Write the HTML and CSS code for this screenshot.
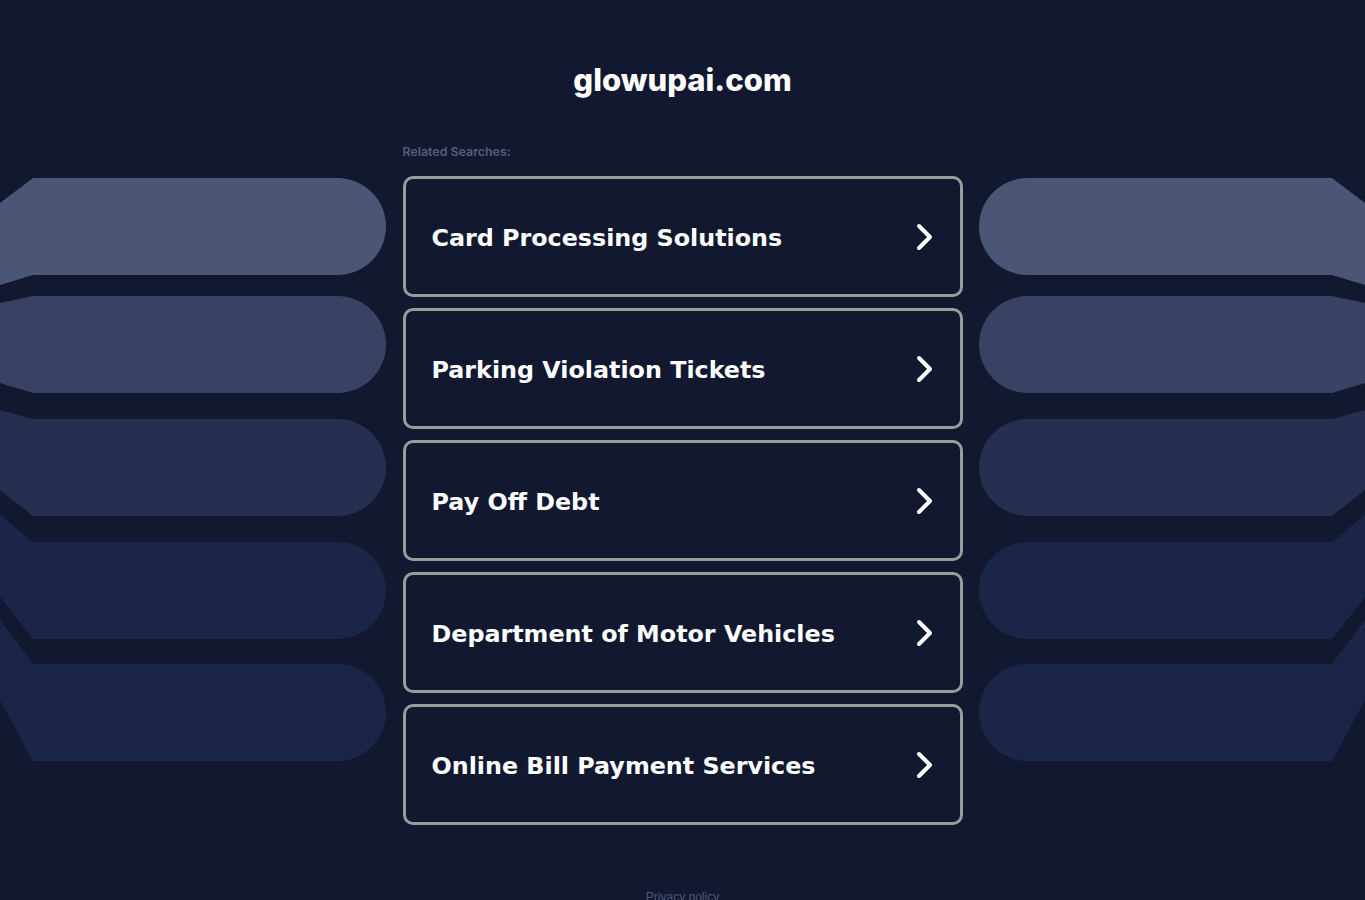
FILE: index.html
```html
<!DOCTYPE html>
<html lang="en">
<head>
<meta charset="utf-8">
<title>glowupai.com</title>
<link rel="stylesheet" href="styles.css">
</head>
<body>
<div class="backdrop" aria-hidden="true">
  <svg class="wing wing-left" viewBox="0 0 386 900" width="386" height="900">
    <defs>
      <pattern id="dots" width="3" height="3" patternUnits="userSpaceOnUse">
        <rect width="3" height="3" fill="#1a2446"/>
        <rect x="1" y="1" width="1" height="1" fill="#212c53"/>
      </pattern>
    </defs>
    <path fill="#4b5574" d="M0,203 L33,178 L337.5,178 A48.5,48.5 0 0 1 337.5,275 L33,275 L0,285 Z"/>
    <path fill="#394262" d="M0,303 L33,296 L337.5,296 A48.5,48.5 0 0 1 337.5,393 L33,393 L0,383 Z"/>
    <path fill="#262f4f" d="M0,410 L33,419 L337.5,419 A48.5,48.5 0 0 1 337.5,516 L33,516 L0,490 Z"/>
    <path fill="url(#dots)" d="M0,515 L33,542 L337.5,542 A48.5,48.5 0 0 1 337.5,639 L33,639 L0,597 Z"/>
    <path fill="url(#dots)" d="M0,620 L33,664 L337.5,664 A48.5,48.5 0 0 1 337.5,761 L33,761 L0,700 Z"/>
  </svg>
  <svg class="wing wing-right" viewBox="0 0 386 900" width="386" height="900">
    <defs>
      <pattern id="dots2" width="3" height="3" patternUnits="userSpaceOnUse">
        <rect width="3" height="3" fill="#1a2446"/>
        <rect x="1" y="1" width="1" height="1" fill="#212c53"/>
      </pattern>
    </defs>
    <path fill="#4b5574" d="M0,203 L33,178 L337.5,178 A48.5,48.5 0 0 1 337.5,275 L33,275 L0,285 Z"/>
    <path fill="#394262" d="M0,303 L33,296 L337.5,296 A48.5,48.5 0 0 1 337.5,393 L33,393 L0,383 Z"/>
    <path fill="#262f4f" d="M0,410 L33,419 L337.5,419 A48.5,48.5 0 0 1 337.5,516 L33,516 L0,490 Z"/>
    <path fill="url(#dots2)" d="M0,515 L33,542 L337.5,542 A48.5,48.5 0 0 1 337.5,639 L33,639 L0,597 Z"/>
    <path fill="url(#dots2)" d="M0,620 L33,664 L337.5,664 A48.5,48.5 0 0 1 337.5,761 L33,761 L0,700 Z"/>
  </svg>
</div>

<main class="page">
  <h1 class="domain">glowupai.com</h1>
  <section class="related">
    <p class="label">Related Searches:</p>
    <ul class="list">
      <li><a class="card" href="#"><span class="card-text">Card Processing Solutions</span><svg class="chev" viewBox="0 0 20 30" width="20" height="30"><path d="M4,4 L15,15 L4,26"/></svg></a></li>
      <li><a class="card" href="#"><span class="card-text">Parking Violation Tickets</span><svg class="chev" viewBox="0 0 20 30" width="20" height="30"><path d="M4,4 L15,15 L4,26"/></svg></a></li>
      <li><a class="card" href="#"><span class="card-text">Pay Off Debt</span><svg class="chev" viewBox="0 0 20 30" width="20" height="30"><path d="M4,4 L15,15 L4,26"/></svg></a></li>
      <li><a class="card" href="#"><span class="card-text">Department of Motor Vehicles</span><svg class="chev" viewBox="0 0 20 30" width="20" height="30"><path d="M4,4 L15,15 L4,26"/></svg></a></li>
      <li><a class="card" href="#"><span class="card-text">Online Bill Payment Services</span><svg class="chev" viewBox="0 0 20 30" width="20" height="30"><path d="M4,4 L15,15 L4,26"/></svg></a></li>
    </ul>
  </section>
  <footer class="footer"><a href="#" class="privacy">Privacy policy</a></footer>
</main>
</body>
</html>
```

FILE: styles.css
```css
html, body {
  margin: 0;
  padding: 0;
}
body {
  background: #121830;
  min-height: 900px;
  overflow: hidden;
  position: relative;
}
.backdrop {
  position: absolute;
  inset: 0;
  z-index: 0;
}
.wing {
  position: absolute;
  top: 0;
  display: block;
}
.wing-left { left: 0; }
.wing-right { right: 0; transform: scaleX(-1); }

.page {
  position: relative;
  z-index: 1;
  width: 560px;
  margin: 0 auto;
  padding-top: 60px;
}
.domain {
  margin: 0;
  text-align: center;
  font-family: Inter, "Open Sans", sans-serif;
  font-weight: 800;
  font-size: 31px;
  line-height: 40px;
  color: #ffffff;
}
.related {
  margin-top: 44px;
}
.label {
  margin: 0 0 16px 0;
  font-family: Inter, "Open Sans", sans-serif;
  font-weight: 600;
  font-size: 12.4px;
  line-height: 16px;
  color: #555d7c;
}
.list {
  list-style: none;
  margin: 0;
  padding: 0;
  display: flex;
  flex-direction: column;
  gap: 11px;
}
.card {
  box-sizing: border-box;
  height: 121px;
  display: flex;
  align-items: center;
  justify-content: space-between;
  padding: 0 25px 0 26px;
  border: 3px solid #9b9b9b;
  border-radius: 10px;
  background: #121830;
  text-decoration: none;
}
.card-text {
  font-family: "DejaVu Sans", Verdana, sans-serif;
  font-weight: 700;
  font-size: 23.8px;
  color: #ffffff;
  margin-top: 3px;
}
.chev {
  display: block;
}
.chev path {
  fill: none;
  stroke: #ffffff;
  stroke-width: 4;
  stroke-linecap: round;
  stroke-linejoin: round;
}
.footer {
  margin-top: 62px;
  text-align: center;
}
.privacy {
  font-family: "Liberation Sans", Arial, sans-serif;
  font-size: 12px;
  line-height: 16px;
  color: #4f5676;
  text-decoration: none;
}
```
